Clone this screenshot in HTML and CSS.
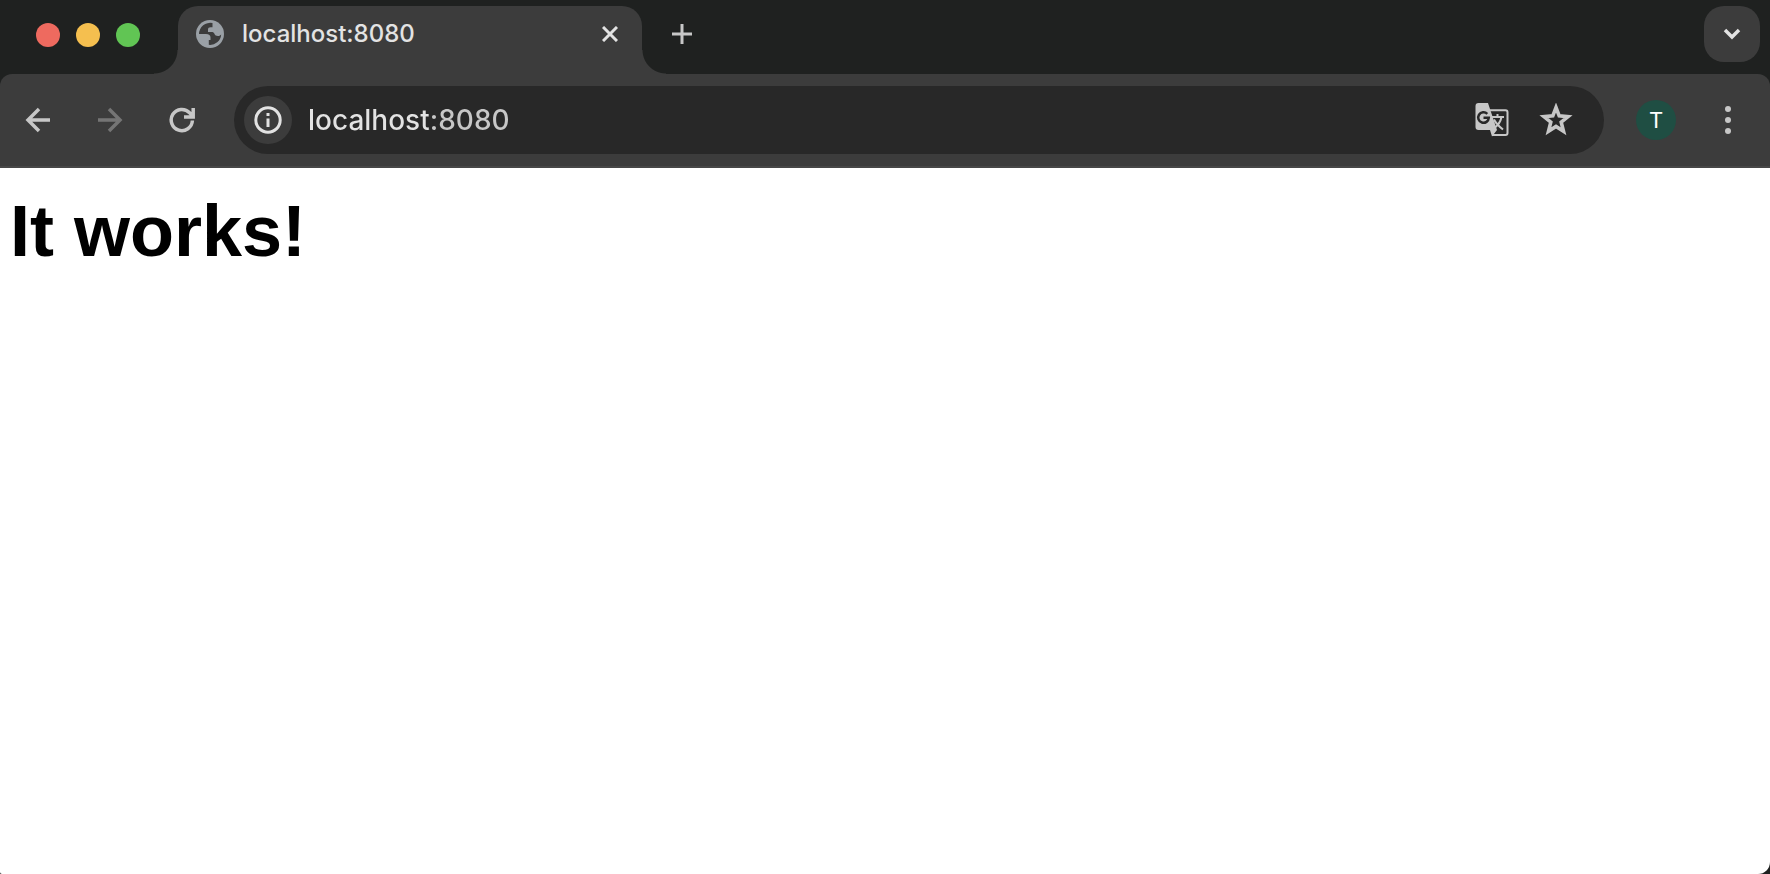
FILE: index.html
```html
<!DOCTYPE html>
<html lang="en">
<head>
  <meta charset="UTF-8">
  <meta name="viewport" content="width=device-width, initial-scale=1.0">
  <title>localhost:8080</title>
  <link rel="stylesheet" href="styles.css">
</head>
<body>
  <div class="browser">

    <!-- Tab strip -->
    <header class="tab-strip">
      <div class="window-controls">
        <button class="light close" aria-label="Close window"></button>
        <button class="light minimize" aria-label="Minimize window"></button>
        <button class="light zoom" aria-label="Zoom window"></button>
      </div>
      <div class="tab">
        <svg class="favicon" viewBox="0 0 28 28" aria-hidden="true">
          <circle cx="14" cy="14" r="14" fill="#9aa0a6"/>
          <path fill="#3c3c3c" d="M16.5 3.1A11.2 11.2 0 0 0 3 14H10C13 14 14.5 15.5 14.5 17.5V20H12.8V24.8A11.2 11.2 0 0 0 25.2 14.5C24.5 15.3 23.5 16 22 16C20 16 19 15.2 18.5 14C18 12.5 17 12 15.5 12H12V9.5C12 8 13 7.2 14.5 7.2H16.5Z"/>
        </svg>
        <span class="tab-title">localhost:8080</span>
        <button class="tab-close" aria-label="Close tab">
          <svg width="16" height="16" viewBox="0 0 16 16"><path d="M1 1 15 15M15 1 1 15"/></svg>
        </button>
      </div>
      <button class="icon-button new-tab" aria-label="New tab">
        <svg width="20" height="20" viewBox="0 0 20 20"><path d="M10 0V20M0 10H20"/></svg>
      </button>
      <button class="icon-button tab-search" aria-label="Search tabs">
        <svg width="18" height="12" viewBox="0 0 18 12"><path d="M2 2 9 9 16 2"/></svg>
      </button>
    </header>

    <!-- Toolbar -->
    <div class="toolbar">
      <nav class="buttons">
        <button class="icon-button" aria-label="Back">
          <svg width="26" height="26" viewBox="0 0 26 26"><path d="M25 13H4M14 2 3 13 14 24"/></svg>
        </button>
        <button class="icon-button" aria-label="Forward" disabled>
          <svg width="26" height="26" viewBox="0 0 26 26"><path d="M1 13H22M12 2 23 13 12 24"/></svg>
        </button>
        <button class="icon-button" aria-label="Reload">
          <svg width="26" height="26" viewBox="0 0 26 26"><path d="M23.4 13.5A10.6 10.6 0 1 1 20.6 5.8L23.5 8.7M24.2 1V10H15"/></svg>
        </button>
      </nav>

      <form class="address-bar">
        <button type="button" class="site-info" aria-label="View site information">
          <svg width="28" height="28" viewBox="0 0 28 28"><circle cx="14" cy="14" r="12.2"/><path d="M14 12.5V21M14 7V10"/></svg>
        </button>
        <input class="url" type="text" value="localhost:8080" aria-label="Address" spellcheck="false">
        <div class="buttons">
          <button type="button" class="page-action" aria-label="Translate this page">
            <svg class="translate" width="34" height="34" viewBox="0 0 34 34">
              <path class="solid" d="M3.5 0H13L22 27L17 33.5L15 27H3.5A3 3 0 0 1 .5 24V3A3 3 0 0 1 3.5 0Z"/>
              <path d="M15 7.2H30.5A2 2 0 0 1 32.5 9.2V30A2 2 0 0 1 30.5 32H17M17 14H29M22.5 11V14M26.5 14C25.5 19 22 23 19.5 25M19 16.5C21 20.5 23.5 23 28 26.5"/>
              <path class="letter" d="M12.3 10.8A5.3 5.3 0 1 0 13.8 14.8H8.5"/>
            </svg>
          </button>
          <button type="button" class="page-action" aria-label="Bookmark this tab">
            <svg class="star" width="34" height="34" viewBox="0 0 34 34"><path d="M17 4.5 20.2 12.9 29 13.6 22.2 19.2 24.5 28.2 17 23.4 9.5 28.2 11.8 19.2 5 13.6 13.8 12.9Z"/></svg>
          </button>
        </div>
      </form>

      <div class="buttons">
        <button class="icon-button" aria-label="Profile"><span class="avatar">T</span></button>
        <button class="icon-button" aria-label="Menu">
          <svg class="dots" width="6" height="28" viewBox="0 0 6 28"><circle cx="3" cy="3" r="3"/><circle cx="3" cy="14" r="3"/><circle cx="3" cy="25" r="3"/></svg>
        </button>
      </div>
    </div>

    <!-- Page content -->
    <main class="page">
      <h1>It works!</h1>
    </main>
  </div>
</body>
</html>
```
FILE: styles.css
```css
body {
  margin: 0;
  background: #1f2120;
  font-family: Inter, "Liberation Sans", sans-serif;
}

button {
  display: flex;
  align-items: center;
  justify-content: center;
  flex: none;
  padding: 0;
  border: none;
  background: none;
  color: #c7c7c7;
  font: inherit;
  cursor: pointer;
}

button:disabled {
  color: #757575;
  cursor: default;
}

svg {
  display: block;
  flex: none;
  fill: none;
  stroke: currentColor;
  stroke-width: 3;
}

.browser {
  display: flex;
  flex-direction: column;
  min-height: 100vh;
  background: #1f2120;
}

/* Tab strip */
.tab-strip {
  display: flex;
  padding: 6px 10px 0 36px;
}

.window-controls {
  display: flex;
  align-items: center;
  gap: 16px;
  height: 58px;
  margin-right: 38px;
}

.light {
  width: 24px;
  height: 24px;
  border-radius: 50%;
}

.close {
  background: #ee6a5f;
}

.minimize {
  background: #f5bf4f;
}

.zoom {
  background: #61c554;
}

.tab {
  position: relative;
  display: flex;
  align-items: center;
  box-sizing: border-box;
  flex: 0 1 464px;
  height: 68px;
  padding: 0 24px 12px 18px;
  border-radius: 20px 20px 0 0;
  background: #3c3c3c;
  color: #e3e3e3;
}

/* curved feet of the tab */
.tab::before,
.tab::after {
  content: "";
  position: absolute;
  bottom: 0;
  width: 24px;
  height: 24px;
}

.tab::before {
  right: 100%;
  background: radial-gradient(circle at 0 0, transparent 23px, #3c3c3c 24px);
}

.tab::after {
  left: 100%;
  background: radial-gradient(circle at 100% 0, transparent 23px, #3c3c3c 24px);
}

.favicon {
  width: 28px;
  height: 28px;
  margin-right: 18px;
  stroke: none;
}

.tab-title {
  flex: 1;
  font-size: 24px;
  font-weight: 500;
  line-height: 28px;
}

.tab-close {
  color: #e3e3e3;
}

.icon-button {
  width: 56px;
  height: 56px;
  border-radius: 20px;
}

.new-tab {
  margin-left: 12px;
}

.tab-search {
  margin-left: auto;
  background: #3c3c3c;
  color: #e3e3e3;
}

/* Toolbar */
.toolbar {
  display: flex;
  align-items: center;
  gap: 24px;
  padding: 12px 14px 12px 10px;
  border-bottom: 2px solid #474747;
  border-radius: 12px 12px 0 0;
  background: #3c3c3c;
}

.toolbar nav svg,
.tab-search svg {
  stroke-width: 3.5;
}

.buttons {
  display: flex;
  align-items: center;
  gap: 16px;
}

.address-bar {
  display: flex;
  align-items: center;
  gap: 16px;
  flex: 1;
  min-width: 0;
  height: 68px;
  padding: 0 24px 0 10px;
  box-sizing: border-box;
  border-radius: 34px;
  background: #282828;
}

.site-info {
  width: 48px;
  height: 48px;
  border-radius: 50%;
  background: #3c3c3c;
  color: #e3e3e3;
}

/* host is brighter than the port */
.url {
  flex: 1;
  min-width: 0;
  height: 48px;
  padding: 0;
  border: none;
  outline: none;
  background: linear-gradient(90deg, #e3e3e3 120px, #c7c7c7 120px);
  -webkit-background-clip: text;
  background-clip: text;
  color: transparent;
  font-family: inherit;
  font-size: 28px;
  font-weight: 500;
}

.page-action {
  width: 48px;
  height: 48px;
}

.translate {
  stroke-width: 2;
}

.translate .solid {
  fill: currentColor;
  stroke: none;
}

.translate .letter {
  stroke: #282828;
  stroke-width: 2.5;
}

.star {
  stroke-width: 3.6;
}

.avatar {
  width: 40px;
  border-radius: 50%;
  background: #1f4e43;
  color: #fff;
  font-size: 22px;
  line-height: 40px;
}

.dots {
  fill: currentColor;
  stroke: none;
}

/* Page content */
.page {
  flex: 1;
  padding: 22px 10px;
  border-radius: 0 0 12px 2px;
  background: #fff;
}

.page h1 {
  margin: 0;
  color: #000;
  font-family: "Liberation Sans", Arial, sans-serif;
  font-size: 72px;
  line-height: 82px;
}
```
